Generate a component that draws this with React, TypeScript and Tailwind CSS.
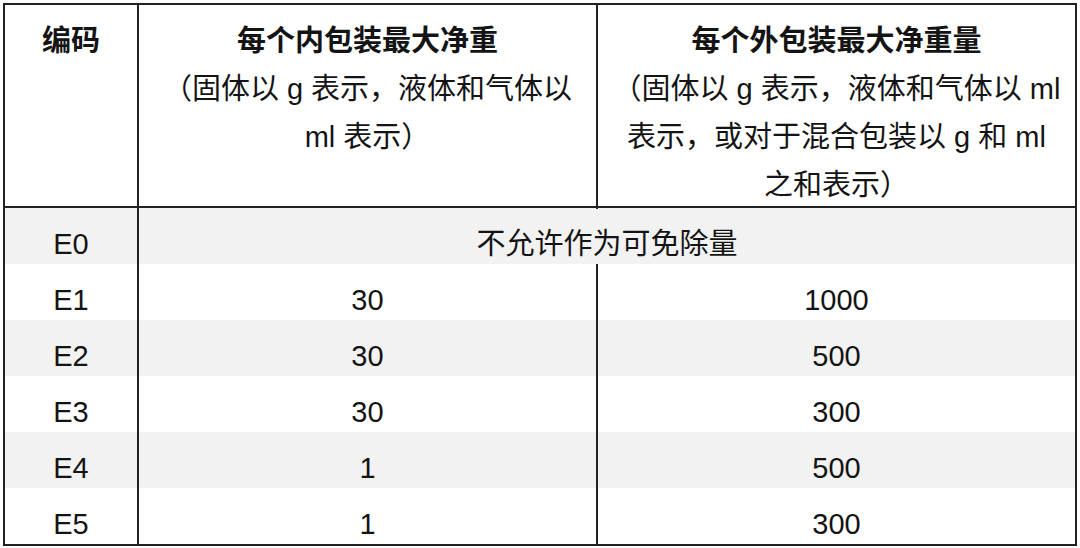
import React from 'react'

interface Row {
  code: string
  inner: string
  outer: string
}

const rows: Row[] = [
  { code: 'E1', inner: '30', outer: '1000' },
  { code: 'E2', inner: '30', outer: '500' },
  { code: 'E3', inner: '30', outer: '300' },
  { code: 'E4', inner: '1', outer: '500' },
  { code: 'E5', inner: '1', outer: '300' },
]

export default function App() {
  return (
    <div className="min-h-[548px] w-[1080px] bg-white pl-[3px] pt-[3px] font-['Liberation_Sans','Noto_Sans_CJK_SC',sans-serif] text-[29px] text-[#141414]">
      <div className="w-[1074px] border-2 border-[#222]">
        {/* Header */}
        <div className="grid h-[203px] grid-cols-[134px_459px_1fr] border-b-2 border-[#222] text-center leading-[48px]">
          <div className="border-r-2 border-[#222] pt-[12px] font-bold">编码</div>
          <div className="whitespace-nowrap border-r-2 border-[#222] pt-[12px]">
            <div className="font-bold">每个内包装最大净重</div>
            <div>（固体以 g 表示，液体和气体以</div>
            <div>ml 表示）</div>
          </div>
          <div className="whitespace-nowrap pt-[12px]">
            <div className="font-bold">每个外包装最大净重量</div>
            <div>（固体以 g 表示，液体和气体以 ml</div>
            <div>表示，或对于混合包装以 g 和 ml</div>
            <div>之和表示）</div>
          </div>
        </div>

        {/* E0 row spans both weight columns */}
        <div className="grid h-[56px] grid-cols-[134px_1fr] bg-[#f2f2f2] text-center leading-[40px]">
          <div className="border-r-2 border-[#222] pt-[16px]">E0</div>
          <div className="pt-[16px]">不允许作为可免除量</div>
        </div>

        {rows.map((row, i) => (
          <div
            key={row.code}
            className={`grid h-[56px] grid-cols-[134px_459px_1fr] text-center leading-[40px] ${i % 2 === 1 ? 'bg-[#f2f2f2]' : 'bg-white'}`}
          >
            <div className="border-r-2 border-[#222] pt-[16px]">{row.code}</div>
            <div className="border-r-2 border-[#222] pt-[16px]">{row.inner}</div>
            <div className="pt-[16px]">{row.outer}</div>
          </div>
        ))}
      </div>
    </div>
  )
}
